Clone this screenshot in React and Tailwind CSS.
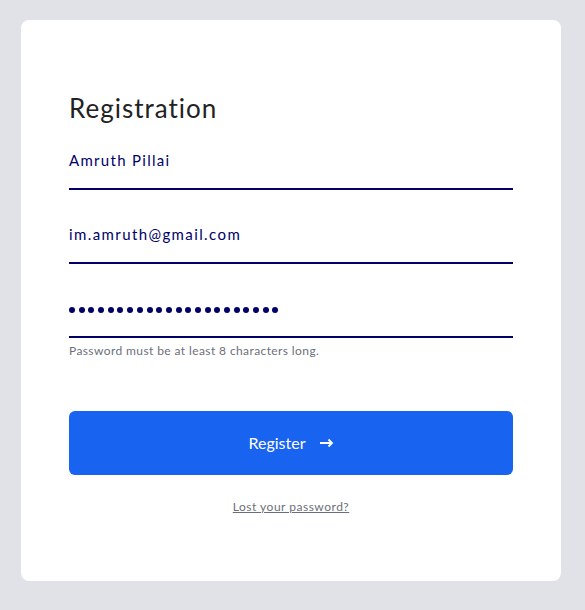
import React from "react";

export default function App() {
  const dots = Array.from({ length: 22 });
  return (
    <div className="min-h-[610px] w-full bg-[#e1e2e7] pt-5 pl-[21px] font-['Lato',sans-serif]">
      <div className="w-[540px] h-[561px] rounded-lg bg-white px-12 pt-[72px]">
        <h1 className="text-[26px] leading-[32px] text-[#222222] font-normal tracking-[1px]">
          Registration
        </h1>
        <div className="mt-[26px] border-b-2 border-[#000066] pb-[18px] text-[15px] leading-[20px] text-[#000066] tracking-[1.3px]">
          Amruth Pillai
        </div>
        <div className="mt-[34px] border-b-2 border-[#000066] pb-[18px] text-[15px] leading-[20px] text-[#000066] tracking-[1.4px]">
          im.amruth@gmail.com
        </div>
        <div className="mt-[34px] border-b-2 border-[#000066] pb-[18px] h-[40px] flex items-end">
          <div className="flex gap-[3.7px] mb-[5px]">
            {dots.map((_, i) => (
              <span key={i} className="block w-[6px] h-[6px] rounded-full bg-[#000066]" />
            ))}
          </div>
        </div>
        <p className="mt-[6px] text-[12px] leading-[14px] text-[#6b6f7a] tracking-[0.4px]">
          Password must be at least 8 characters long.
        </p>
        <button className="mt-[53px] flex h-[64px] w-full items-center justify-center gap-[14px] rounded-md bg-[#1863ef] text-[16px] text-white">
          <span>Register</span>
          <svg width="14" height="10" viewBox="0 0 14 10" fill="none">
            <path d="M0 5H12M8.5 1.5L12 5L8.5 8.5" stroke="white" strokeWidth="1.8" />
          </svg>
        </button>
        <div className="mt-[18px] text-center">
          <a className="text-[12px] text-[#6b6f7a] underline tracking-[0.5px]" href="#">
            Lost your password?
          </a>
        </div>
      </div>
    </div>
  );
}
